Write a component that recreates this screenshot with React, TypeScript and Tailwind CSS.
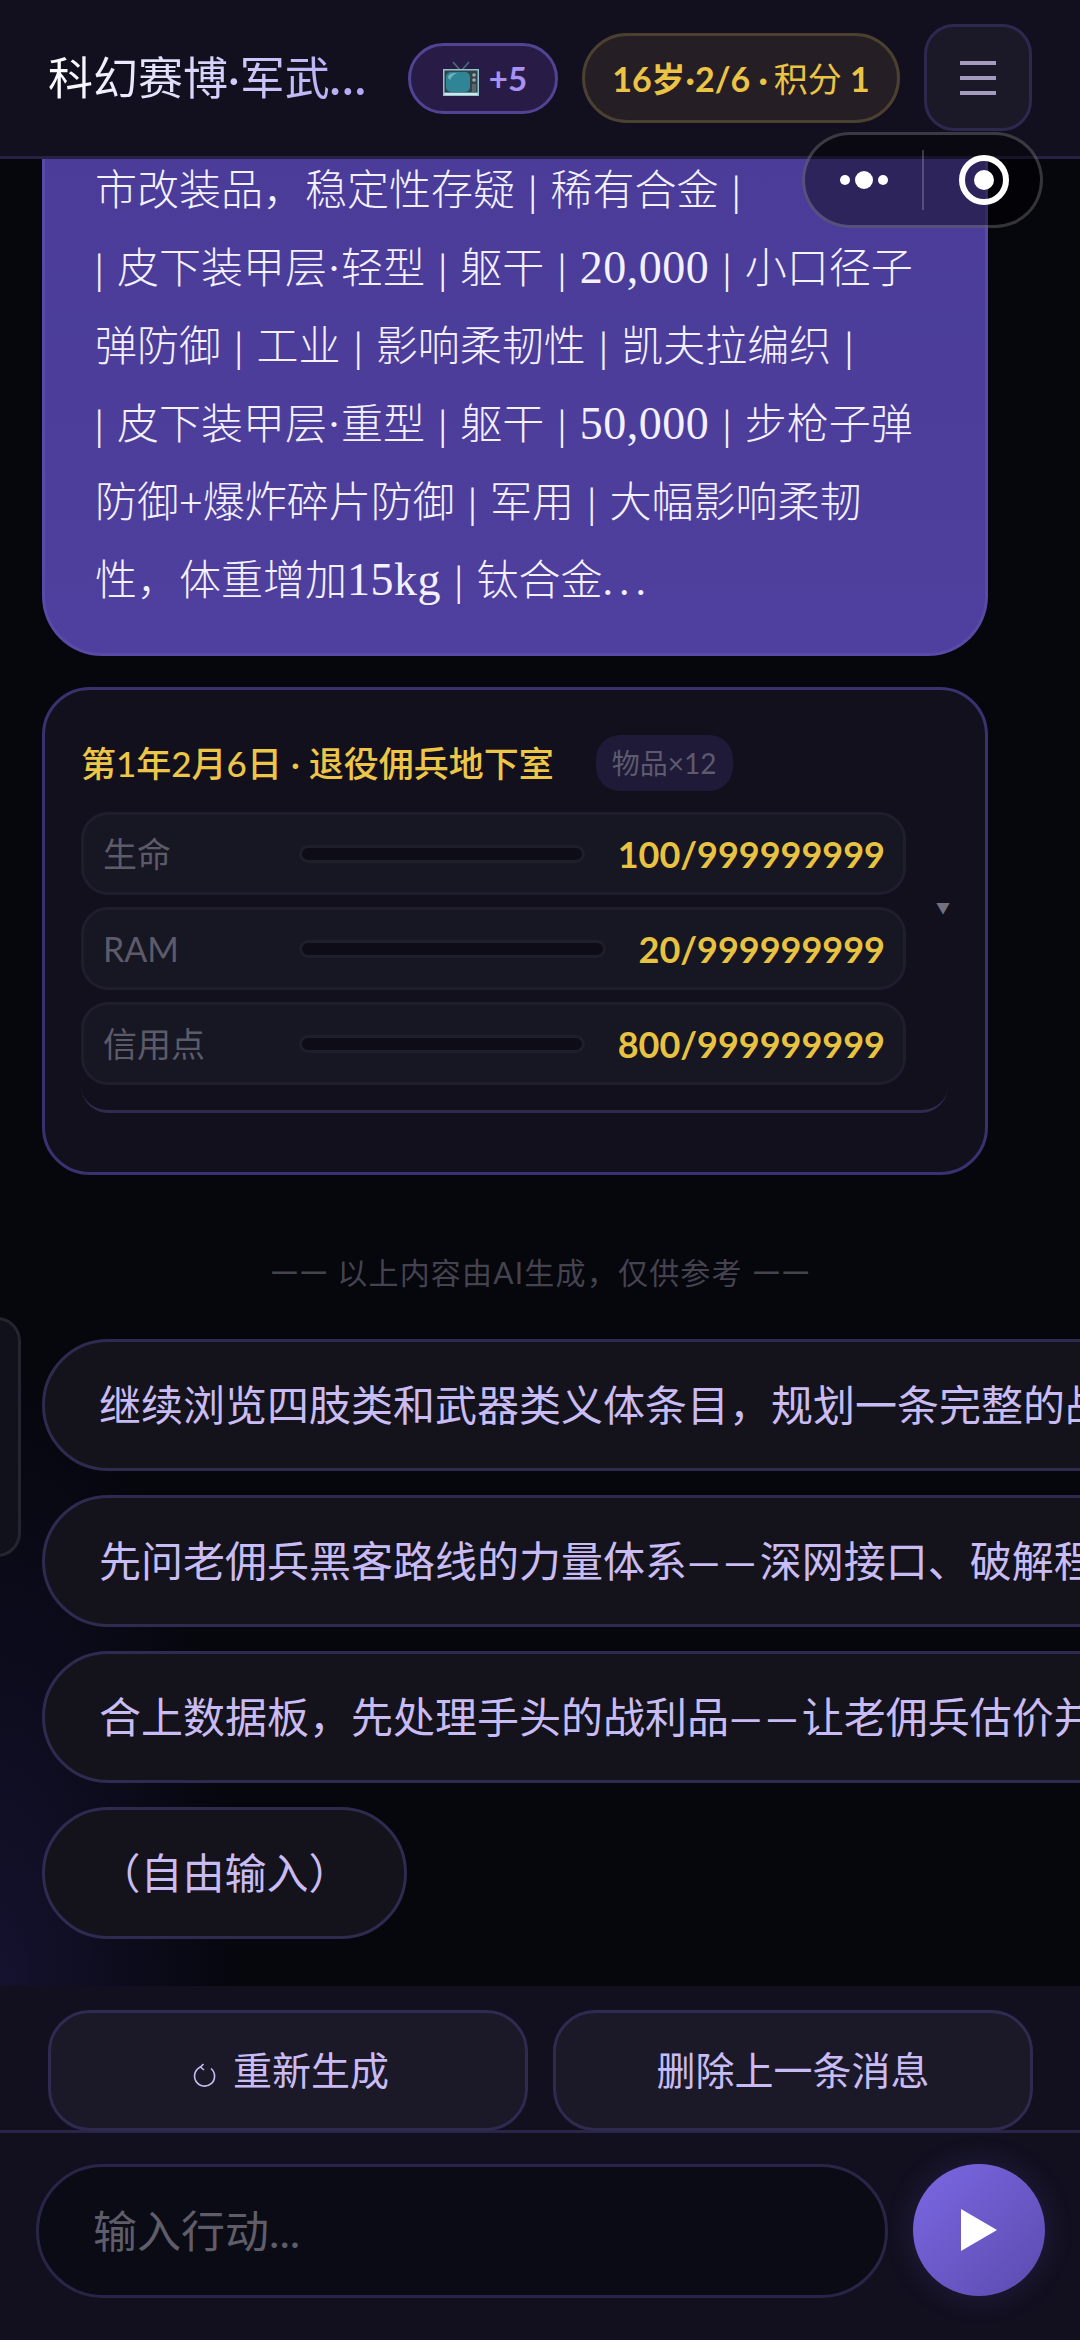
const sans = "font-['Lato','Noto_Sans_CJK_SC',sans-serif]";

// latin in the bubble sits a size above the CJK around it
const num = "text-[46px] leading-none tracking-[0.5px]";

const bubbleLines = [
  <>市改装品，稳定性存疑 | 稀有合金 |</>,
  <>| 皮下装甲层·轻型 | 躯干 | <span className={num}>20,000</span> | 小口径子</>,
  <>弹防御 | 工业 | 影响柔韧性 | 凯夫拉编织 |</>,
  <>| 皮下装甲层·重型 | 躯干 | <span className={num}>50,000</span> | 步枪子弹</>,
  <>防御+爆炸碎片防御 | 军用 | 大幅影响柔韧</>,
  <>性，体重增加<span className={num}>15kg</span> | 钛合金<span className="tracking-[6px]">...</span></>,
];

const stats = [
  { label: "生命", value: "100/999999999" },
  { label: "RAM", value: "20/999999999" },
  { label: "信用点", value: "800/999999999" },
];

const dash = <span className="tracking-[3px]">——</span>;

const choices = [
  <>继续浏览四肢类和武器类义体条目，规划一条完整的战斗型改造路线</>,
  <>先问老佣兵黑客路线的力量体系{dash}深网接口、破解程序和反追踪</>,
  <>合上数据板，先处理手头的战利品{dash}让老佣兵估价并换成信用点</>,
];

function TvIcon() {
  return (
    <svg width="36" height="36" viewBox="0 0 36 36">
      <path d="M17 9 L10 1 M19 9 L26 1" stroke="#4f6f78" strokeWidth="1.5" />
      <rect x="0" y="8" width="36" height="27" fill="#8fc4cc" />
      <rect x="1.5" y="9.5" width="33" height="22" fill="#33434a" />
      <rect x="3" y="11" width="24" height="20" rx="5" fill="#2f8496" />
      <path d="M5 17 C5 13 8 12 14 12 C10 14 8 16 7 19 Z" fill="#6fb3bf" />
      <circle cx="31" cy="14" r="1.8" fill="#9aa8ac" />
      <circle cx="31" cy="19" r="1.8" fill="#9aa8ac" />
      <rect x="29" y="23" width="4" height="8" fill="#56666c" />
      <rect x="1.5" y="32" width="33" height="2" fill="#cfe6ea" />
    </svg>
  );
}

function StatRow({ label, value }: { label: string; value: string }) {
  return (
    <div className="flex h-[83px] items-center rounded-[27px] border-[3px] border-[#201e2e] bg-[#171623] pl-[19px] pr-[18px]">
      <span className="w-[196px] shrink-0 text-[34px] text-[#5d5b69]">{label}</span>
      <div className="mr-[33px] h-[18px] flex-1 rounded-full border-[3px] border-[#1f1e2b] bg-[#0e0d17]" />
      <span className="shrink-0 text-[36px] font-bold text-[#e8c241]">{value}</span>
    </div>
  );
}

function Choice({ children }: { children: React.ReactNode }) {
  return (
    <div className="flex h-[132px] w-max items-center whitespace-nowrap rounded-full border-[3px] border-[#2e2a50] bg-[#14131b] px-[54px] text-[42px] text-[#c9bcf5]">
      {children}
    </div>
  );
}

export default function App() {
  return (
    <div className={`relative flex h-[2340px] w-[1080px] flex-col overflow-hidden bg-[#06060d] ${sans}`}>
      {/* header */}
      <header className="z-10 flex h-[159px] shrink-0 items-start border-b-[3px] border-[#272245] bg-[#12101f] pl-[48px] pr-[48px]">
        <h1 className="mt-[50px] w-[360px] shrink-0 whitespace-nowrap bg-gradient-to-r from-white to-[#a99bf2] bg-clip-text text-[45px] font-normal leading-[56px] text-transparent">
          科幻赛博·军武<span className="font-bold tracking-[2px]">...</span>
        </h1>
        <div className="mt-[43px] flex h-[71px] w-[150px] shrink-0 items-center justify-center gap-[10px] rounded-full border-[3px] border-[#524394] bg-[#281c47] pl-[4px]">
          <TvIcon />
          <span className="text-[33px] font-bold text-[#a893f5]">+5</span>
        </div>
        <div className="ml-[24px] mt-[33px] flex h-[90px] w-[318px] shrink-0 items-center justify-center rounded-full border-[3px] border-[#4c4130] bg-[#251f25] text-[34px] font-bold text-[#ecc445]">
          16岁·2/6 · <span className="ml-[6px] font-normal">积分</span>&nbsp;1
        </div>
        <button className="ml-[24px] mt-[24px] flex h-[107px] w-[108px] shrink-0 flex-col items-center justify-center gap-[11px] rounded-[30px] border-[3px] border-[#2d2850] bg-[#1b1928]">
          <span className="h-[4px] w-[36px] bg-[#a39cbc]" />
          <span className="h-[4px] w-[36px] bg-[#a39cbc]" />
          <span className="h-[4px] w-[36px] bg-[#a39cbc]" />
        </button>
      </header>

      {/* mini program capsule */}
      <div className="absolute left-[802px] top-[132px] z-20 flex h-[96px] w-[241px] items-center rounded-full border-[3px] border-[#ffffff33] bg-[#00000066]">
        <div className="flex w-[117px] items-center justify-center gap-[5px]">
          <span className="h-[10px] w-[10px] rounded-full bg-white" />
          <span className="h-[18px] w-[18px] rounded-full bg-white" />
          <span className="h-[10px] w-[10px] rounded-full bg-white" />
        </div>
        <div className="h-[60px] w-[2px] bg-[#ffffff33]" />
        <div className="ml-[35px] flex h-[50px] w-[50px] items-center justify-center rounded-full border-[6px] border-white">
          <span className="h-[20px] w-[20px] rounded-full bg-white" />
        </div>
      </div>

      {/* chat area */}
      <main className="relative min-h-0 flex-1 bg-[radial-gradient(ellipse_240px_620px_at_0%_100%,#14122e,transparent)]">
        <div className="-mt-[7px] ml-[42px] w-[946px] rounded-b-[60px] border-x-[3px] border-b-[3px] border-[#5a4aa8] bg-gradient-to-b from-[#4a3c98] to-[#4f3f9e] pb-[33px] pl-[50px] font-['Liberation_Serif','Noto_Sans_CJK_SC',serif] text-[42px] font-light leading-[78px] text-[#f3f0ff] [word-spacing:3px]">
          {bubbleLines.map((line, i) => (
            <div key={i} className="whitespace-nowrap">
              {line}
            </div>
          ))}
        </div>

        <section className="ml-[42px] mt-[31px] h-[488px] w-[946px] rounded-[48px] border-[3px] border-[#3a3170] bg-[#12101d] pl-[36px] pr-[37px] pt-[45px]">
          <div className="flex items-center">
            <span className="text-[35px] font-medium leading-[54px] text-[#edc648]">第1年2月6日 · 退役佣兵地下室</span>
            <span className="ml-[42px] flex h-[56px] items-center rounded-[24px] bg-[#1f1a38] px-[16px] text-[28px] text-[#5d5a6f]">物品×12</span>
          </div>
          <div className="relative mt-[21px] h-[301px] rounded-b-[27px] border-b-[3px] border-[#2e2a50]">
            <div className="flex w-[825px] flex-col gap-[12px]">
              {stats.map((s) => (
                <StatRow key={s.label} label={s.label} value={s.value} />
              ))}
            </div>
            <span className="absolute right-[-2px] top-[85px] text-[14px] text-[#73717f]">▼</span>
          </div>
        </section>

        <p className="mt-[76px] text-center text-[30px] leading-[40px] tracking-[1.2px] text-[#45434f]">
          <span className="text-[37px] leading-none tracking-normal">——</span> 以上内容由AI生成，仅供参考{" "}
          <span className="text-[37px] leading-none tracking-normal">——</span>
        </p>

        <div className="ml-[42px] mt-[47px] flex flex-col gap-[24px]">
          {choices.map((c, i) => (
            <Choice key={i}>{c}</Choice>
          ))}
          <div className="flex h-[132px] w-[365px] items-center justify-center rounded-full border-[3px] border-[#2e2a50] bg-[#14131b] text-[42px] text-[#c9bcf5]">
            （自由输入）
          </div>
        </div>

        {/* collapsed side drawer */}
        <div className="absolute left-[-3px] top-[1158px] h-[240px] w-[24px] rounded-r-[24px] border-[3px] border-[#25252f] bg-[#10111a]" />
      </main>

      {/* action buttons */}
      <div className="z-10 flex h-[147px] shrink-0 items-start gap-[25px] border-b-[3px] border-[#2a2548] bg-[#12101f] pl-[48px] pt-[24px]">
        <button className="flex h-[121px] w-[480px] items-center justify-center gap-[16px] rounded-[42px] border-[3px] border-[#2e2a50] bg-[#1b1928] pl-[6px] text-[39px] text-[#c9bcf5]">
          <svg width="24" height="24" viewBox="0 0 24 24" fill="none" stroke="#c9bcf5" strokeWidth="1.6" className="mt-[8px]">
            <path d="M18 5.5 A10 10 0 1 1 7.5 4" />
            <path d="M10.5 1 L7.5 4 L11 7" />
          </svg>
          重新生成
        </button>
        <button className="flex h-[121px] w-[480px] items-center justify-center rounded-[42px] border-[3px] border-[#2e2a50] bg-[#1b1928] text-[39px] text-[#c9bcf5]">
          删除上一条消息
        </button>
      </div>

      {/* input */}
      <footer className="z-10 flex h-[207px] shrink-0 items-start gap-[25px] bg-[#12101f] pl-[36px] pt-[31px]">
        <div className="flex h-[134px] w-[852px] items-center rounded-full border-[3px] border-[#2a2548] bg-[#0b0b15] pl-[54px] text-[44px] text-[#5f5d69]">
          输入行动...
        </div>
        <button className="flex h-[132px] w-[132px] items-center justify-center rounded-full bg-gradient-to-br from-[#7b68e4] to-[#5c4bae] shadow-[0_0_30px_#6a58d033]">
          <svg width="38" height="42" viewBox="0 0 38 42">
            <path d="M1 0 L37 21 L1 42 Z" fill="#fff" />
          </svg>
        </button>
      </footer>
    </div>
  );
}
